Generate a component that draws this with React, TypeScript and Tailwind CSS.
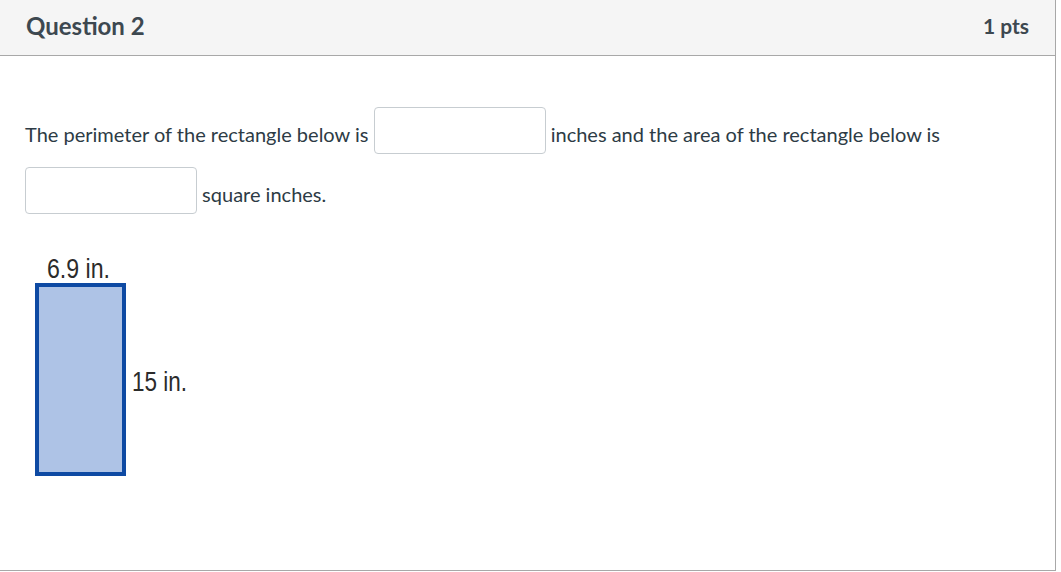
import React from 'react';

function RectangleFigure() {
  // figure of the question: 6.9 in. by 15 in. rectangle
  return (
    <svg width="200" height="236" viewBox="0 0 200 236" className="block">
      <text
        x="22"
        y="32"
        fontSize="27"
        fill="#2b2b2b"
        textLength="63"
        lengthAdjust="spacingAndGlyphs"
        fontFamily="'Liberation Sans', Arial, sans-serif"
      >
        6.9 in.
      </text>
      <rect x="12" y="39" width="87" height="189" fill="#aec3e6" stroke="#0e4aa3" strokeWidth="4" />
      <text
        x="107"
        y="145"
        fontSize="27"
        fill="#2b2b2b"
        textLength="55"
        lengthAdjust="spacingAndGlyphs"
        fontFamily="'Liberation Sans', Arial, sans-serif"
      >
        15 in.
      </text>
    </svg>
  );
}

function Blank() {
  return (
    <input
      type="text"
      className="inline-block h-[47px] w-[172px] rounded-[4px] border border-[#c7cdd1] bg-white align-top mt-[3px] outline-none"
    />
  );
}

export default function App() {
  return (
    <div className="min-h-[572px] bg-white font-['Lato','Noto_Sans',sans-serif] text-[#2d3b45]">
      <div className="w-[1056px] h-[571px] border-r border-b border-[#a8a8a8] flex flex-col">
        <div className="flex h-[56px] items-center justify-between border-b border-[#a8a8a8] bg-[#f5f5f5] px-[26px] pb-[4px]">
          <h2 className="text-[24px] font-bold text-[#3d4850]">Question 2</h2>
          <span className="text-[21px] font-bold text-[#3d4850]">1 pts</span>
        </div>
        <div className="pl-[25px] pr-[100px] pt-[48px]">
          <p className="text-[20px] leading-[60px]">
            The perimeter of the rectangle below is <Blank /> inches and the area of the rectangle below is{' '}
            <Blank /> square inches.
          </p>
          <div className="mt-[22px]">
            <RectangleFigure />
          </div>
        </div>
      </div>
    </div>
  );
}
